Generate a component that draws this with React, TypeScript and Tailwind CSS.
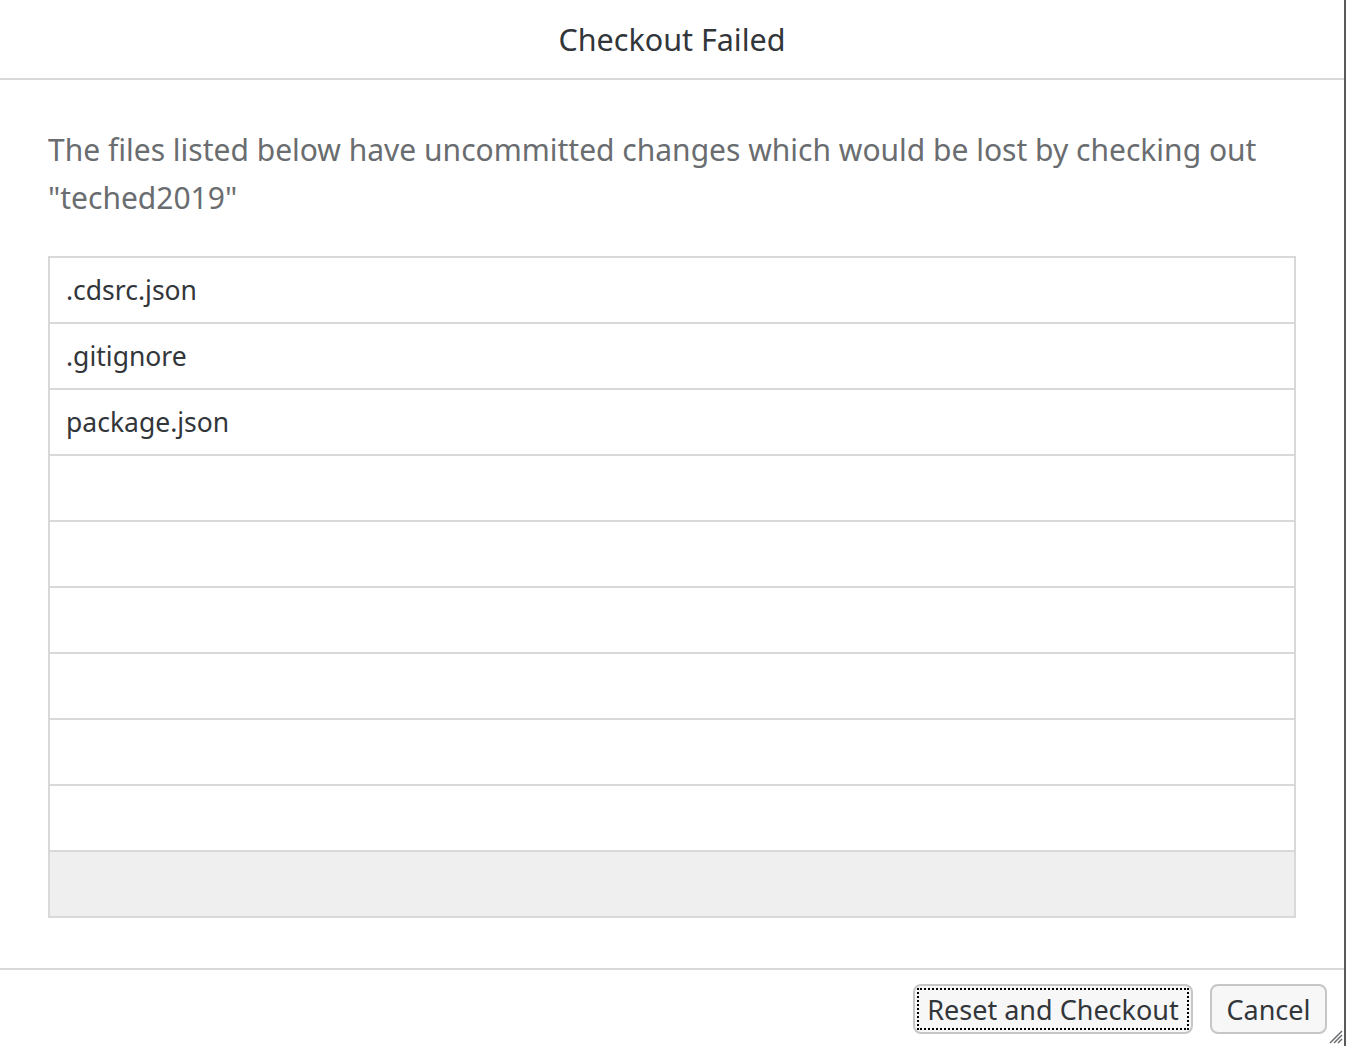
import React from "react"

const FILES = [".cdsrc.json", ".gitignore", "package.json", "", "", "", "", "", "", ""]

export default function App() {
    return (
        <div className="flex h-[1046px] w-[1346px] bg-white font-['Noto_Sans',sans-serif] text-[#32363a]">
            <div className="relative flex flex-1 flex-col">
                <div className="flex h-[80px] shrink-0 items-center justify-center border-b-2 border-[#d9d9d9]">
                    <h1 className="text-[30.5px] leading-none">Checkout Failed</h1>
                </div>

                <div className="flex flex-1 flex-col px-[48px] pt-[46px]">
                    <p className="text-[30px] leading-[48px] text-[#6a6d70]">
                        The files listed below have uncommitted changes which would be lost by checking out "teched2019"
                    </p>
                    <div className="mt-[34px] border-2 border-b-0 border-[#d9d9d9]">
                        {FILES.map((name, i) => (
                            <div
                                key={i}
                                className={
                                    "flex h-[66px] items-center border-b-2 border-[#d9d9d9] px-[16px] pt-[2px] text-[26.5px] " +
                                    (i === FILES.length - 1 ? "bg-[#efefef]" : "bg-white")
                                }
                            >
                                {name}
                            </div>
                        ))}
                    </div>
                </div>

                <div className="flex h-[78px] shrink-0 items-start justify-end gap-[17px] border-t-2 border-[#d9d9d9] pr-[17px] pt-[14px]">
                    <button className="flex h-[50px] w-[280px] items-center justify-center rounded-[8px] border-2 border-[#c6c6c6] bg-[#f7f7f7] p-[2px]">
                        <span className="flex h-full w-full items-center justify-center border-2 border-dotted border-black text-[27px] leading-none">
                            Reset and Checkout
                        </span>
                    </button>
                    <button className="flex h-[50px] w-[117px] items-center justify-center rounded-[8px] border-2 border-[#c6c6c6] bg-[#f7f7f7] text-[27px] leading-none">
                        Cancel
                    </button>
                </div>

                <svg className="absolute bottom-[2px] right-[1px] h-[14px] w-[14px]" viewBox="0 0 14 14">
                    <path d="M13 1 L1 13 M13 5 L5 13 M13 9 L9 13" stroke="#6a6d70" strokeWidth="1.5" />
                </svg>
            </div>
            <div className="w-[2px] bg-[#5a5a5a]" />
        </div>
    )
}
